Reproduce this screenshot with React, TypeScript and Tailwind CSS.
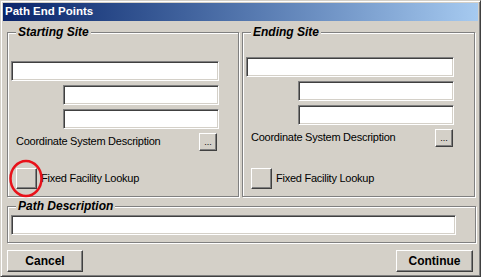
import React from 'react';

const sunken =
  'bg-white border border-t-[#808080] border-l-[#808080] border-b-white border-r-white shadow-[inset_1px_1px_0_#404040,inset_-1px_-1px_0_#d4d0c8]';
const raised =
  'bg-[#d4d0c8] border border-t-white border-l-white border-b-[#404040] border-r-[#404040] shadow-[inset_-1px_-1px_0_#808080,inset_1px_1px_0_#d4d0c8]';
const etched = 'relative border border-[#808080] shadow-[inset_1px_1px_0_#fff,1px_1px_0_#fff]';
const small = 'text-[11px] tracking-[-0.25px] text-black leading-[13px]';

function GroupLabel({ children }: { children: React.ReactNode }) {
  return (
    <span className="absolute left-[8px] top-[-8px] px-[2px] bg-[#d4d0c8] text-[12px] leading-[14px] font-bold italic text-black">
      {children}
    </span>
  );
}

function Input({ className }: { className: string }) {
  return <div className={`${sunken} h-[20px] ${className}`} />;
}

function SiteGroup({ title, firstTop, lookupTop, ring }: { title: string; firstTop: string; lookupTop: string; ring?: boolean }) {
  return (
    <div className={`${etched} flex flex-col h-[165px]`}>
      <GroupLabel>{title}</GroupLabel>
      <Input className={`${firstTop} ml-[3px] w-[208px]`} />
      <Input className="mt-[4px] ml-[55px] w-[156px]" />
      <Input className="mt-[4px] ml-[55px] w-[156px]" />
      <div className="mt-[4px] flex items-center h-[17px] pl-[8px]">
        <span className={small}>Coordinate System Description</span>
        <div className={`${raised} ml-auto mr-[21px] w-[18px] h-[18px] flex items-end justify-center pb-[3px] text-[9px] leading-[9px]`}>...</div>
      </div>
      <div className={`${lookupTop} relative flex items-center pl-[8px]`}>
        <div className={`${raised} w-[21px] h-[21px]`} />
        <span className={`${small} ml-[4px]`}>Fixed Facility Lookup</span>
        {ring && (
          <svg className="absolute left-[1px] top-[-9px]" width="35" height="39" viewBox="0 0 35 39">
            <ellipse cx="17" cy="19.5" rx="15.5" ry="17.5" fill="none" stroke="#e8121a" strokeWidth="2.5" />
          </svg>
        )}
      </div>
    </div>
  );
}

export default function App() {
  return (
    <div className="w-[481px] h-[277px] bg-[#d4d0c8] border border-t-[#d4d0c8] border-l-[#d4d0c8] border-r-[#404040] border-b-[#404040] shadow-[inset_1px_1px_0_#fff,inset_-1px_-1px_0_#808080] p-[2px] flex flex-col font-['Liberation_Sans',Arial,sans-serif]">
      <div className="h-[18px] bg-gradient-to-r from-[#0a246a] to-[#a6caf0] flex items-center pl-[2px]">
        <span className="text-white text-[11.5px] font-bold">Path End Points</span>
      </div>
      <div className="flex flex-col pl-[4px] pr-[3px]">
        <div className="mt-[11px] grid grid-cols-[232px_233px] gap-x-[3px]">
          <SiteGroup title="Starting Site" firstTop="mt-[28px]" lookupTop="mt-[18px]" ring />
          <SiteGroup title="Ending Site" firstTop="mt-[24px]" lookupTop="mt-[22px]" />
        </div>
        <div className={`${etched} mt-[9px] h-[37px] w-[469px] flex flex-col`}>
          <GroupLabel>Path Description</GroupLabel>
          <Input className="mt-[8px] ml-[3px] w-[445px]" />
        </div>
        <div className="mt-[7px] flex justify-between w-[466px]">
          <div className={`${raised} w-[76px] h-[22px] flex items-center justify-center text-[12px] font-bold text-black`}>Cancel</div>
          <div className={`${raised} w-[77px] h-[22px] flex items-center justify-center text-[12px] font-bold text-black`}>Continue</div>
        </div>
      </div>
    </div>
  );
}
